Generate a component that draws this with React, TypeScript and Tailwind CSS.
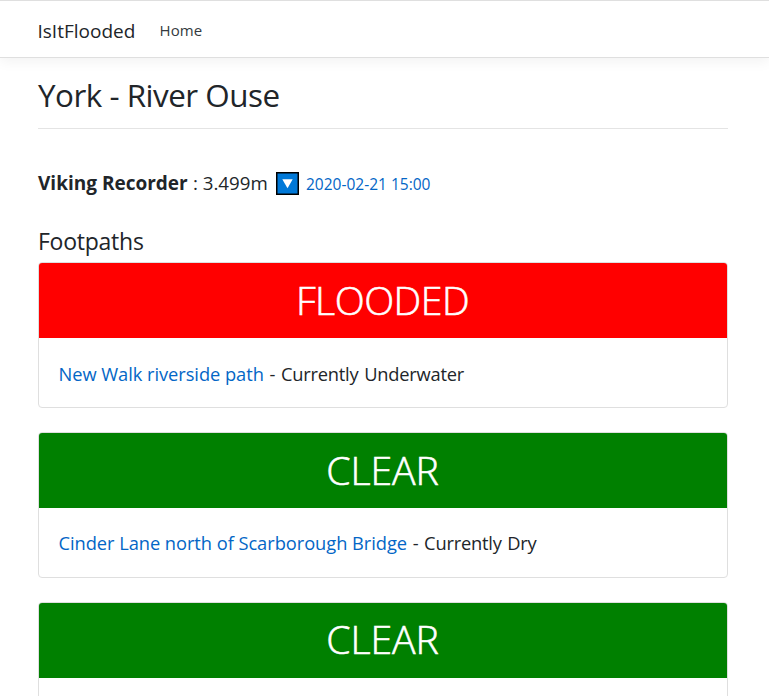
type Footpath = {
  status: 'FLOODED' | 'CLEAR';
  name: string;
  note: string;
  statusLine: string;
  noteOffset: string;
};

const footpaths: Footpath[] = [
  { status: 'FLOODED', name: 'New Walk riverside path', note: 'Currently Underwater', statusLine: 'leading-[74px]', noteOffset: 'pt-[22px]' },
  { status: 'CLEAR', name: 'Cinder Lane north of Scarborough Bridge', note: 'Currently Dry', statusLine: 'leading-[74px]', noteOffset: 'pt-[21px]' },
  { status: 'CLEAR', name: '', note: '', statusLine: 'leading-[72px]', noteOffset: 'pt-[21px]' },
];

function FallingIcon() {
  return (
    <svg width="23" height="23" viewBox="0 0 23 23" className="ml-[8px] shrink-0" aria-label="Falling">
      <rect x="0.75" y="0.75" width="21.5" height="21.5" fill="#0078d7" stroke="#000" strokeWidth="1.5" />
      <path d="M6.3 7.2h10.4l-5.2 9z" fill="#fff" />
    </svg>
  );
}

function PathCard({ status, name, note, statusLine, noteOffset }: Footpath) {
  const flooded = status === 'FLOODED';
  return (
    <article className="h-[146px] overflow-hidden rounded-[4px] border border-[#dfdfdf] bg-white">
      <h3
        className={`h-[75px] text-center text-[39.2px] font-light text-white [-webkit-text-stroke:0.6px_white] ${statusLine} ${
          flooded ? 'bg-[#ff0000] pr-[1px] tracking-[-0.5px]' : 'bg-[#008000] pr-[1px] tracking-[-0.1px]'
        }`}
      >
        {status}
      </h3>
      <p className={`px-[19.5px] text-[18.3px] leading-[27px] tracking-[-0.22px] whitespace-nowrap [word-spacing:1.2px] ${noteOffset}`}>
        <a className="tracking-[-0.05px] text-[#0366c6] [word-spacing:0px]">{name}</a>
        {name && ' - '}
        {note}
      </p>
    </article>
  );
}

export default function App() {
  return (
    <div className="h-[696px] overflow-hidden bg-white font-['Open_Sans','Noto_Sans',sans-serif] text-[#212529]">
      <header className="flex h-[58px] items-center border-y border-[#dfdfdf] pl-[37.5px] shadow-[0_4px_12px_rgba(0,0,0,0.05)]">
        <span className="w-[122px] pt-[3px] text-[19px] leading-[28px]">IsItFlooded</span>
        <a className="pt-[2px] text-[15px] leading-[24px] tracking-[0.1px] text-[#343a40]">Home</a>
      </header>
      <main className="pr-[41px] pl-[38px]">
        <h1 className="h-[71px] border-b border-[#e4e4e4] pt-[17px] text-[31.4px] leading-[40px] tracking-[-0.5px]">York - River Ouse</h1>
        <div className="mt-[42px] flex h-[24px] items-center whitespace-nowrap">
          <span className="w-[155px] text-[19px] leading-[24px] font-bold">Viking Recorder</span>
          <span className="w-[75px] text-[18.7px] leading-[24px]">: 3.499m</span>
          <FallingIcon />
          <a className="ml-[7px] pt-[2px] text-[15.5px] leading-[24px] text-[#0366c6]">2020-02-21 15:00</a>
        </div>
        <h2 className="mt-[32px] h-[35px] text-[23px] leading-[29px] tracking-[-0.25px]">Footpaths</h2>
        <section className="flex flex-col gap-[24px]">
          {footpaths.map((path, i) => (
            <PathCard key={i} {...path} />
          ))}
        </section>
      </main>
    </div>
  );
}
